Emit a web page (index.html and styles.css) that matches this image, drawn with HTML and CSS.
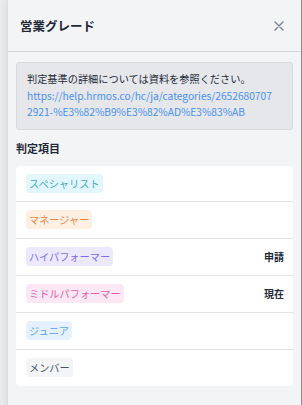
FILE: index.html
```html
<!DOCTYPE html>
<html lang="ja">
  <head>
    <meta charset="UTF-8" />
    <meta name="viewport" content="width=device-width,initial-scale=1" />
    <title>営業グレード</title>
    <link rel="stylesheet" href="styles.css">
  </head>
  <body>
    <div class="panel">
      <div class="panel-header">
        <h1>営業グレード</h1>
        <button class="close" aria-label="閉じる">
          <svg width="10" height="10" viewBox="0 0 10 10">
            <path d="M1 1L9 9M9 1L1 9" stroke="#7b8494" stroke-width="1.4" stroke-linecap="round" />
          </svg>
        </button>
      </div>
      <div class="panel-body">
        <div class="notice">
          判定基準の詳細については資料を参照ください。<br>
          <a href="#">https://help.hrmos.co/hc/ja/categories/26526807072921-%E3%82%B9%E3%82%AD%E3%83%AB</a>
        </div>
        <h2>判定項目</h2>
        <ul class="grades">
          <li><span class="tag tag-cyan">スペシャリスト</span></li>
          <li><span class="tag tag-orange">マネージャー</span></li>
          <li><span class="tag tag-purple">ハイパフォーマー</span><span class="state">申請</span></li>
          <li><span class="tag tag-pink">ミドルパフォーマー</span><span class="state">現在</span></li>
          <li><span class="tag tag-blue">ジュニア</span></li>
          <li><span class="tag tag-gray">メンバー</span></li>
        </ul>
      </div>
    </div>
  </body>
</html>
```

FILE: styles.css
```css
html,
body {
  height: 100%;
}

body {
  margin: 0;
  background-color: #e9eaec;
  font-family: "Noto Sans CJK JP", "Noto Sans", sans-serif;
  color: #1f2937;
}

.panel {
  margin-left: 7px;
  height: 100%;
  box-sizing: border-box;
  background-color: #f3f4f6;
  border-left: 1px solid #dcdde0;
  border-right: 1px solid #8a8d93;
  box-shadow: -2px 0 4px rgba(0, 0, 0, 0.05);
}

.panel-header {
  display: flex;
  align-items: center;
  justify-content: space-between;
  height: 51px;
  padding: 0 17px 0 12px;
  border-bottom: 1px solid #d4d6da;
}

.panel-header h1 {
  margin: 0;
  font-size: 12.5px;
  font-weight: bold;
  color: #1f2937;
}

.close {
  display: flex;
  padding: 0;
  border: none;
  background: none;
  cursor: pointer;
}

.panel-body {
  padding: 10px 8px 0 8px;
}

.notice {
  padding: 8px 15px 8px 10px;
  background-color: #e5e7eb;
  border: 1px solid #d9dbdf;
  border-radius: 3px;
  font-size: 10.2px;
  line-height: 16.5px;
  color: #1f2937;
}

.notice a {
  color: #4a8ff0;
  text-decoration: none;
  word-break: break-all;
}

h2 {
  margin: 10px 0 10px;
  font-size: 11px;
  line-height: 16px;
  font-weight: bold;
}

.grades {
  list-style: none;
  margin: 0;
  padding: 0;
  background-color: #ffffff;
  border-radius: 3px;
}

.grades li {
  display: flex;
  align-items: center;
  justify-content: space-between;
  height: 36px;
  padding: 0 9px 0 10px;
  border-top: 1px solid #e2e3e7;
}

.grades li:first-child {
  height: 35px;
  border-top: none;
}

.tag {
  display: inline-block;
  padding: 0 3px;
  height: 19px;
  line-height: 19px;
  border-radius: 4px;
  font-size: 10.2px;
}

.state {
  font-size: 10px;
  font-weight: bold;
  color: #1f2937;
}

.tag-cyan {
  background-color: #e1f7fd;
  color: #4aa7c2;
}

.tag-orange {
  background-color: #fdf0e3;
  color: #e3884b;
}

.tag-purple {
  background-color: #ece9fe;
  color: #7e6cf2;
}

.tag-pink {
  background-color: #fce8f4;
  color: #e35fab;
}

.tag-blue {
  background-color: #e6f1ff;
  color: #5c9ef2;
}

.tag-gray {
  background-color: #f3f4f6;
  color: #4b5563;
}
```
